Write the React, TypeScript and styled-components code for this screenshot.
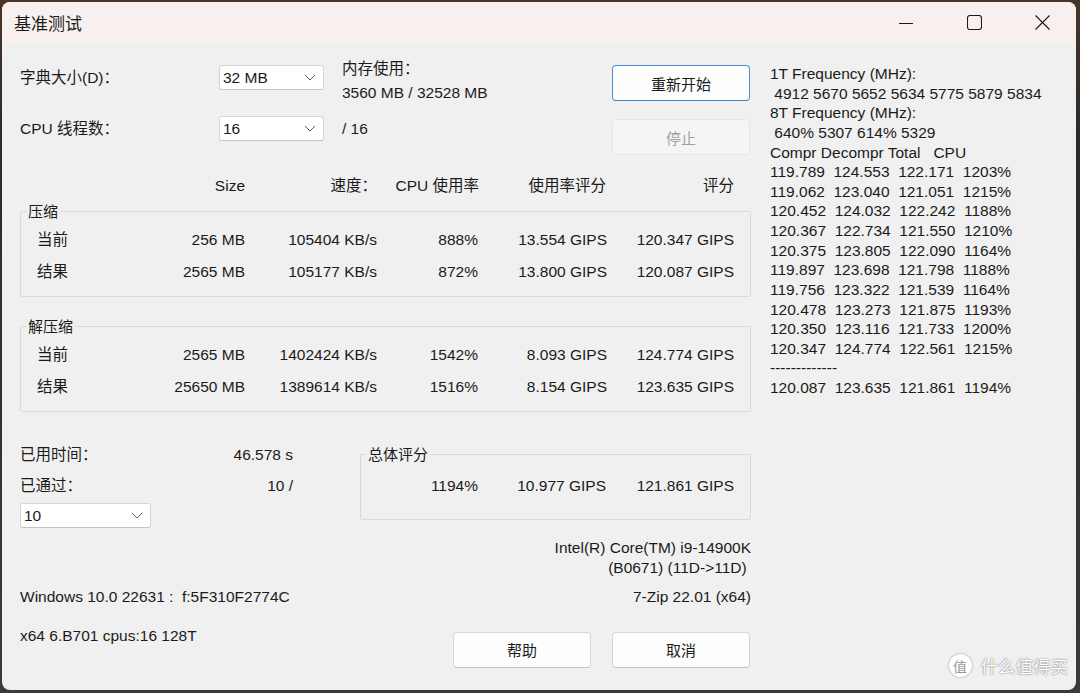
import styled, { createGlobalStyle } from "styled-components";

const GlobalStyle = createGlobalStyle`
  html, body {
    margin: 0;
    padding: 0;
    background: #2c2826;
  }
  body {
    font-family: "Liberation Sans", "Noto Sans CJK SC", sans-serif;
    font-size: 15.5px;
    color: #1b1b1b;
  }
`;

// window frame

const Backdrop = styled.div`
  width: 1080px;
  height: 693px;
  background: linear-gradient(180deg, #4a3528 0%, #2e2a28 20%, #3a3a3a 100%);
  padding: 2px 4px 3px 2px;
  box-sizing: border-box;
`;

const Window = styled.div`
  position: relative;
  width: 1074px;
  height: 688px;
  background: #f0f0f0;
  border-radius: 8px;
  overflow: hidden;
  display: flex;
  flex-direction: column;
`;

const TitleBar = styled.div`
  height: 41px;
  background: #f7f0ee;
  display: flex;
  align-items: center;
  justify-content: space-between;
`;

const Title = styled.div`
  padding-left: 12px;
  font-family: "Noto Sans CJK SC", sans-serif;
  font-size: 17px;
  color: #1a1a1a;
`;

const Controls = styled.div`
  display: flex;
  height: 100%;
`;

const CtrlButton = styled.div`
  width: 68px;
  height: 100%;
  display: flex;
  align-items: center;
  justify-content: center;
`;

const Body = styled.div`
  display: flex;
  align-items: flex-start;
  padding: 22px 0 0 18px;
`;

const LeftPanel = styled.div`
  width: 731px;
  display: flex;
  flex-direction: column;
`;

// top settings

const TopGrid = styled.div`
  display: grid;
  grid-template-columns: 199px 105px 18px 270px 138px;
  grid-template-rows: 51px 39px;
  align-items: start;
`;

const Label = styled.div<{ $col?: number }>`
  line-height: 25px;
  white-space: pre;
  grid-column: ${(p) => p.$col ?? 1};
`;

const SelectBox = styled.div<{ $w?: number }>`
  width: ${(p) => (p.$w ? `${p.$w}px` : "100%")};
  height: 25px;
  box-sizing: border-box;
  background: #fff;
  border: 1px solid #d6d6d6;
  border-bottom-color: #c4c4c4;
  border-radius: 3px;
  display: flex;
  align-items: center;
  justify-content: space-between;
  padding: 0 7px 0 3px;
  line-height: 23px;
`;

const MemInfo = styled.div`
  grid-column: 4;
  margin-top: -8px;
  line-height: 24px;
`;

const Button = styled.div<{ $primary?: boolean; $disabled?: boolean; $top?: number }>`
  height: 36px;
  width: 138px;
  box-sizing: border-box;
  margin-top: ${(p) => p.$top ?? 0}px;
  display: flex;
  align-items: center;
  justify-content: center;
  border-radius: 4px;
  font-family: "Noto Sans CJK SC", sans-serif;
  font-size: 15px;
  background: ${(p) => (p.$disabled ? "#f5f5f5" : "#fdfdfd")};
  color: ${(p) => (p.$disabled ? "#a0a0a0" : "#1b1b1b")};
  border: 1px solid
    ${(p) => (p.$primary ? "#4a8fd6" : p.$disabled ? "#e6e6e6" : "#d6d6d6")};
  border-bottom-color: ${(p) =>
    p.$primary ? "#3f83cc" : p.$disabled ? "#e6e6e6" : "#c2c2c2"};
`;

// results table

const Cols = styled.div<{ $tpl: string; $h: number }>`
  display: grid;
  grid-template-columns: ${(p) => p.$tpl};
  line-height: ${(p) => p.$h}px;
  white-space: pre;
`;

const Cell = styled.div<{ $left?: boolean; $pad?: number }>`
  text-align: ${(p) => (p.$left ? "left" : "right")};
  padding-left: ${(p) => p.$pad ?? 0}px;
`;

const Header = styled(Cols)`
  margin-top: 21px;
`;

const Group = styled.fieldset<{ $top: number; $pt: number; $pb: number }>`
  margin: ${(p) => p.$top}px 0 0 0;
  padding: ${(p) => p.$pt}px 0 ${(p) => p.$pb}px 0;
  border: 1px solid #dadada;
  border-radius: 2px;
  min-width: 0;
`;

const Legend = styled.legend`
  margin-left: 5px;
  padding: 0 2px;
  line-height: 20px;
  font-family: "Noto Sans CJK SC", sans-serif;
  font-size: 15px;
`;

// bottom part

const BottomRow = styled.div`
  display: flex;
  align-items: flex-start;
  margin-top: 27px;
`;

const Elapsed = styled.div`
  width: 340px;
`;

const KV = styled.div`
  width: 273px;
  display: flex;
  justify-content: space-between;
  line-height: 31px;
  white-space: pre;
`;

const PassSelect = styled.div`
  margin-top: 2px;
`;

const CpuName = styled.div`
  margin-top: 10px;
  text-align: right;
  line-height: 20px;
  white-space: pre;
`;

const InfoRow = styled.div<{ $top: number }>`
  display: flex;
  justify-content: space-between;
  align-items: flex-start;
  margin-top: ${(p) => p.$top}px;
  line-height: 20px;
  white-space: pre;
`;

const Buttons = styled.div`
  display: flex;
  gap: 21px;
  margin-top: 6px;
  margin-right: 1px;
`;

// right log column

const Log = styled.div`
  margin: -1px 0 0 19px;
  line-height: 19.625px;
  white-space: pre;
`;

const Watermark = styled.div`
  position: absolute;
  right: 8px;
  bottom: 12px;
  display: flex;
  align-items: center;
  gap: 9px;
  font-family: "Noto Sans CJK SC", sans-serif;
  color: #ffffff;
  text-shadow: 0 0 2px rgba(0, 0, 0, 0.45), 0 0 1px rgba(0, 0, 0, 0.3);
  font-size: 17.5px;
`;

const Badge = styled.div`
  width: 23px;
  height: 23px;
  border-radius: 50%;
  background: #ffffff;
  box-shadow: 0 0 2px rgba(0, 0, 0, 0.45);
  color: #9a9a9a;
  text-shadow: none;
  font-size: 14px;
  display: flex;
  align-items: center;
  justify-content: center;
`;

const Chevron = () => (
  <svg width="12" height="7" viewBox="0 0 12 7">
    <path d="M1 1 L6 6 L11 1" fill="none" stroke="#5e5e5e" strokeWidth="1" />
  </svg>
);

const Select = ({ value, width }: { value: string; width?: number }) => (
  <SelectBox $w={width}>
    <span>{value}</span>
    <Chevron />
  </SelectBox>
);

const tableCols = "130px 95px 132px 102px 127px 128px";
const groupCols = "129px 95px 132px 101px 129px 127px";

const compress = [
  ["当前", "256 MB", "105404 KB/s", "888%", "13.554 GIPS", "120.347 GIPS"],
  ["结果", "2565 MB", "105177 KB/s", "872%", "13.800 GIPS", "120.087 GIPS"],
];
const decompress = [
  ["当前", "2565 MB", "1402424 KB/s", "1542%", "8.093 GIPS", "124.774 GIPS"],
  ["结果", "25650 MB", "1389614 KB/s", "1516%", "8.154 GIPS", "123.635 GIPS"],
];

const logLines = [
  "1T Frequency (MHz):",
  " 4912 5670 5652 5634 5775 5879 5834",
  "8T Frequency (MHz):",
  " 640% 5307 614% 5329",
  "Compr Decompr Total   CPU",
  "119.789  124.553  122.171  1203%",
  "119.062  123.040  121.051  1215%",
  "120.452  124.032  122.242  1188%",
  "120.367  122.734  121.550  1210%",
  "120.375  123.805  122.090  1164%",
  "119.897  123.698  121.798  1188%",
  "119.756  123.322  121.539  1164%",
  "120.478  123.273  121.875  1193%",
  "120.350  123.116  121.733  1200%",
  "120.347  124.774  122.561  1215%",
  "-------------",
  "120.087  123.635  121.861  1194%",
];

const ResultRows = ({ rows }: { rows: string[][] }) => (
  <>
    {rows.map((r) => (
      <Cols key={r[0]} $tpl={groupCols} $h={32}>
        {r.map((c, i) => (
          <Cell key={i} $left={i === 0} $pad={i === 0 ? 16 : 0}>
            {c}
          </Cell>
        ))}
      </Cols>
    ))}
  </>
);

export default function App() {
  return (
    <>
      <GlobalStyle />
      <Backdrop>
        <Window>
          <TitleBar>
            <Title>基准测试</Title>
            <Controls>
              <CtrlButton>
                <svg width="14" height="14" viewBox="0 0 14 14">
                  <path d="M0 7.5 H14" stroke="#1a1a1a" strokeWidth="1" />
                </svg>
              </CtrlButton>
              <CtrlButton>
                <svg width="15" height="15" viewBox="0 0 15 15">
                  <rect x="0.5" y="0.5" width="14" height="14" rx="2.5" fill="none" stroke="#1a1a1a" strokeWidth="1.1" />
                </svg>
              </CtrlButton>
              <CtrlButton>
                <svg width="15" height="15" viewBox="0 0 15 15">
                  <path d="M0.5 0.5 L14.5 14.5 M14.5 0.5 L0.5 14.5" stroke="#1a1a1a" strokeWidth="1.1" />
                </svg>
              </CtrlButton>
            </Controls>
          </TitleBar>

          <Body>
            <LeftPanel>
              <TopGrid>
                <Label>字典大小(D)：</Label>
                <Select value="32 MB" />
                <MemInfo>
                  内存使用：
                  <br />
                  3560 MB / 32528 MB
                </MemInfo>
                <Button $primary style={{ gridColumn: 5 }}>重新开始</Button>

                <Label>CPU 线程数：</Label>
                <Select value="16" />
                <Label $col={4}>/ 16</Label>
                <Button $disabled $top={3} style={{ gridColumn: 5 }}>停止</Button>
              </TopGrid>

              <Header $tpl={tableCols} $h={20}>
                <Cell />
                <Cell>Size</Cell>
                <Cell>速度：</Cell>
                <Cell>CPU 使用率</Cell>
                <Cell>使用率评分</Cell>
                <Cell>评分</Cell>
              </Header>

              <Group $top={5} $pt={3} $pb={8}>
                <Legend>压缩</Legend>
                <ResultRows rows={compress} />
              </Group>

              <Group $top={19} $pt={3} $pb={8}>
                <Legend>解压缩</Legend>
                <ResultRows rows={decompress} />
              </Group>

              <BottomRow>
                <Elapsed>
                  <KV>
                    <span>已用时间：</span>
                    <span>46.578 s</span>
                  </KV>
                  <KV>
                    <span>已通过：</span>
                    <span>10 /</span>
                  </KV>
                  <PassSelect>
                    <Select value="10" width={131} />
                  </PassSelect>
                </Elapsed>
                <Group $top={5} $pt={6} $pb={18} style={{ width: 391, boxSizing: "border-box" }}>
                  <Legend>总体评分</Legend>
                  <Cols $tpl="117px 128px 128px" $h={31}>
                    <Cell>1194%</Cell>
                    <Cell>10.977 GIPS</Cell>
                    <Cell>121.861 GIPS</Cell>
                  </Cols>
                </Group>
              </BottomRow>

              <CpuName>
                Intel(R) Core(TM) i9-14900K
                <br />
                {"(B0671) (11D->11D) "}
              </CpuName>

              <InfoRow $top={9}>
                <span>{"Windows 10.0 22631 :  f:5F310F2774C"}</span>
                <span>7-Zip 22.01 (x64)</span>
              </InfoRow>

              <InfoRow $top={19}>
                <span>x64 6.B701 cpus:16 128T</span>
                <Buttons>
                  <Button>帮助</Button>
                  <Button>取消</Button>
                </Buttons>
              </InfoRow>
            </LeftPanel>

            <Log>
              {logLines.map((l, i) => (
                <div key={i}>{l}</div>
              ))}
            </Log>
          </Body>

          <Watermark>
            <Badge>值</Badge>
            <span>什么值得买</span>
          </Watermark>
        </Window>
      </Backdrop>
    </>
  );
}
